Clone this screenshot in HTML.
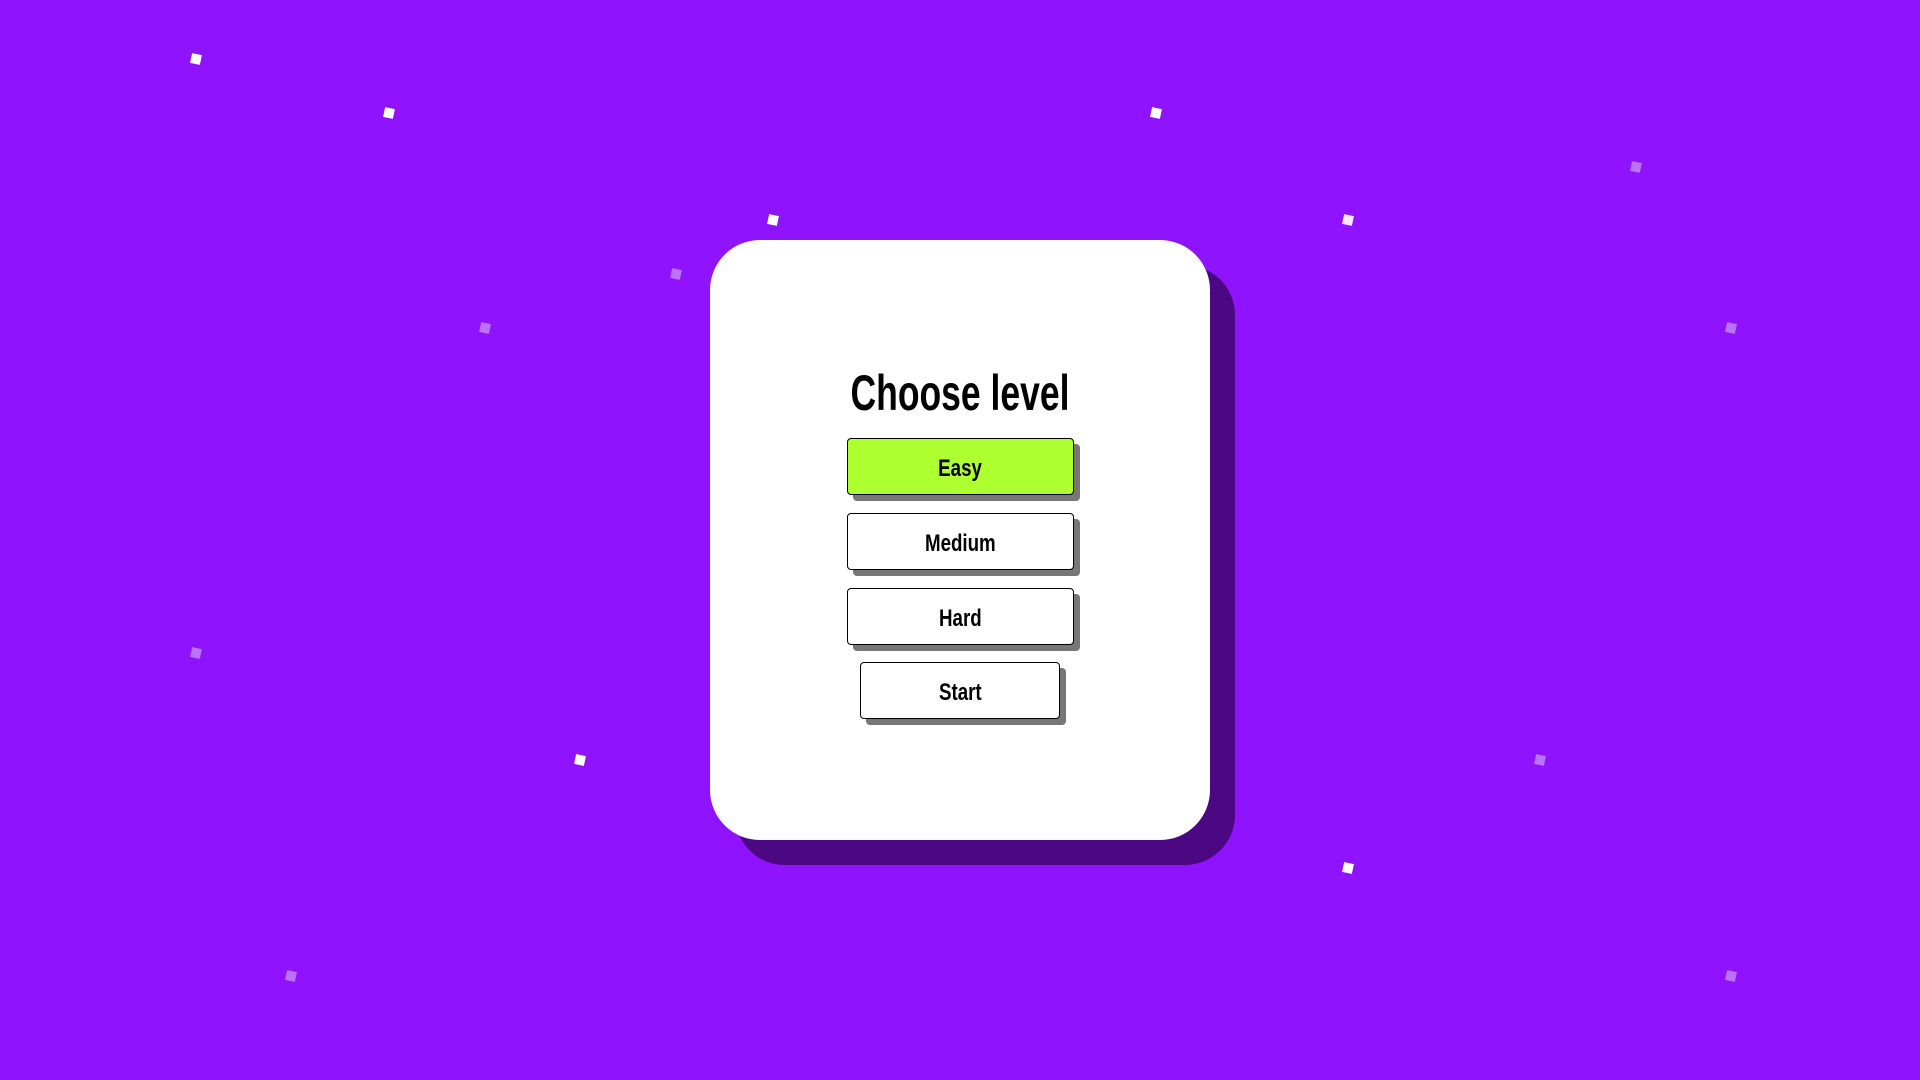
<!DOCTYPE html>
<html><head><style>
body{margin:0;width:1920px;height:1080px;background:#9013fe;overflow:hidden;position:relative;font-family:"Liberation Sans",sans-serif}
.d{position:absolute;width:10px;height:10px;background:#fff;transform:rotate(12deg)}
.f{background:#c48cf5;opacity:.8}
.shadow{position:absolute;left:735px;top:265px;width:500px;height:600px;border-radius:50px;background:#4c0883}
.card{position:absolute;left:710px;top:240px;width:500px;height:600px;border-radius:50px;background:#fff}
h1{position:absolute;left:0;width:1920px;top:364px;margin:0;text-align:center;font-size:50px;font-weight:bold;color:#000;transform:scaleX(0.71)}
.b{position:absolute;box-sizing:border-box;border:1.5px solid #000;border-radius:4px;background:#fff;box-shadow:6px 6px 0 #777;text-align:center;font-size:24px;color:#000}
.b span{display:inline-block;transform:scaleX(0.78);font-weight:bold;-webkit-text-stroke:0px}
</style></head><body>
<div class="d" style="left:191px;top:54px"></div>
<div class="d" style="left:384px;top:108px"></div>
<div class="d" style="left:768px;top:215px"></div>
<div class="d" style="left:1151px;top:108px"></div>
<div class="d" style="left:1343px;top:215px;opacity:.9"></div>
<div class="d f" style="left:1631px;top:162px"></div>
<div class="d f" style="left:671px;top:269px"></div>
<div class="d f" style="left:480px;top:323px"></div>
<div class="d f" style="left:1726px;top:323px"></div>
<div class="d f" style="left:191px;top:648px"></div>
<div class="d" style="left:575px;top:755px"></div>
<div class="d f" style="left:1535px;top:755px"></div>
<div class="d" style="left:1343px;top:863px"></div>
<div class="d f" style="left:286px;top:971px"></div>
<div class="d f" style="left:1726px;top:971px"></div>
<div class="shadow"></div>
<div class="card"></div>
<h1>Choose level</h1>
<div class="b" style="left:847px;top:438px;width:227px;height:57px;line-height:60px;background:#adff2f"><span>Easy</span></div>
<div class="b" style="left:847px;top:513px;width:227px;height:57px;line-height:60px"><span>Medium</span></div>
<div class="b" style="left:847px;top:588px;width:227px;height:57px;line-height:60px"><span>Hard</span></div>
<div class="b" style="left:860px;top:662px;width:200px;height:57px;line-height:60px"><span>Start</span></div>
</body></html>
